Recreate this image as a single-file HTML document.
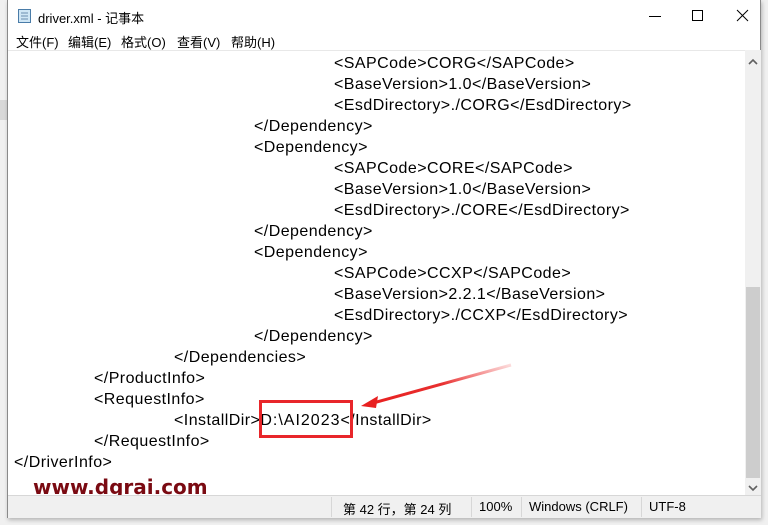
<!DOCTYPE html>
<html><head><meta charset="utf-8"><style>
*{margin:0;padding:0;box-sizing:border-box}
body{width:768px;height:525px;background:#f0f0f0;position:relative;overflow:hidden;font-family:"Liberation Sans","Noto Sans CJK SC",sans-serif}
.win{position:absolute;left:7px;top:0;width:754px;height:518px;background:#fff;border:1px solid #8a8a8a;border-top:none;box-shadow:1px 2px 4px rgba(0,0,0,.25)}
.title{position:absolute;left:0;top:0;width:100%;height:32px;font-size:13px;color:#000}
.title span{position:absolute;left:30px;top:8px}
.menu{position:absolute;left:0;top:31px;height:19px;width:100%;font-size:13px}
.menu span{position:absolute;top:1px}
.edit{position:absolute;left:0;top:50px;width:737px;height:445px;background:#fff;border-top:1px solid #e8e8e8}
.l{position:absolute;font-size:16px;line-height:21px;color:#000;white-space:pre;letter-spacing:0.45px;font-family:"Liberation Sans","Noto Sans CJK SC",sans-serif}
.sb{position:absolute;left:737px;top:50px;width:16px;height:445px;background:#f0f0f0}
.thumb{position:absolute;left:1px;top:237px;width:14px;height:191px;background:#cdcdcd}
.status{position:absolute;left:0;top:495px;width:753px;height:23px;background:#f0f0f0;border-top:1px solid #d7d7d7;font-size:13px}
.status span{position:absolute;top:3px}
.sep{position:absolute;top:1px;width:1px;height:20px;background:#d7d7d7}
</style></head><body>
<div style="position:absolute;left:0;top:100px;width:7px;height:20px;background:#d8d8d8"></div>
<div class="win">
 <div class="title">
  <svg style="position:absolute;left:9px;top:8px" width="15" height="16"><rect x="1.5" y="1.5" width="12" height="13" fill="#cfe6f5" stroke="#4a7ca8"/><path d="M4 5h7M4 8h7M4 11h7" stroke="#6b8fb0"/></svg>
  <span>driver.xml - 记事本</span>
  <svg style="position:absolute;left:641px;top:9px" width="110" height="14"><path d="M0 7.5h12" stroke="#000"/><rect x="43.5" y="1.5" width="10" height="10" fill="none" stroke="#000"/><path d="M88 1l11 11M99 1l-11 11" stroke="#000"/></svg>
 </div>
 <div class="menu">
  <span style="left:8px">文件(F)</span><span style="left:60px">编辑(E)</span><span style="left:113px">格式(O)</span><span style="left:169px">查看(V)</span><span style="left:223px">帮助(H)</span>
 </div>
 <div class="edit"></div>
 <div class="l" style="left:326px;top:53px">&lt;SAPCode&gt;CORG&lt;/SAPCode&gt;</div>
 <div class="l" style="left:326px;top:74px">&lt;BaseVersion&gt;1.0&lt;/BaseVersion&gt;</div>
 <div class="l" style="left:326px;top:95px">&lt;EsdDirectory&gt;./CORG&lt;/EsdDirectory&gt;</div>
 <div class="l" style="left:246px;top:116px">&lt;/Dependency&gt;</div>
 <div class="l" style="left:246px;top:137px">&lt;Dependency&gt;</div>
 <div class="l" style="left:326px;top:158px">&lt;SAPCode&gt;CORE&lt;/SAPCode&gt;</div>
 <div class="l" style="left:326px;top:179px">&lt;BaseVersion&gt;1.0&lt;/BaseVersion&gt;</div>
 <div class="l" style="left:326px;top:200px">&lt;EsdDirectory&gt;./CORE&lt;/EsdDirectory&gt;</div>
 <div class="l" style="left:246px;top:221px">&lt;/Dependency&gt;</div>
 <div class="l" style="left:246px;top:242px">&lt;Dependency&gt;</div>
 <div class="l" style="left:326px;top:263px">&lt;SAPCode&gt;CCXP&lt;/SAPCode&gt;</div>
 <div class="l" style="left:326px;top:284px">&lt;BaseVersion&gt;2.2.1&lt;/BaseVersion&gt;</div>
 <div class="l" style="left:326px;top:305px">&lt;EsdDirectory&gt;./CCXP&lt;/EsdDirectory&gt;</div>
 <div class="l" style="left:246px;top:326px">&lt;/Dependency&gt;</div>
 <div class="l" style="left:166px;top:347px">&lt;/Dependencies&gt;</div>
 <div class="l" style="left:86px;top:368px">&lt;/ProductInfo&gt;</div>
 <div class="l" style="left:86px;top:389px">&lt;RequestInfo&gt;</div>
 <div class="l" style="left:166px;top:410px">&lt;InstallDir&gt;<span style="letter-spacing:1px">D:\AI2023</span>&lt;/InstallDir&gt;</div>
 <div class="l" style="left:86px;top:431px">&lt;/RequestInfo&gt;</div>
 <div class="l" style="left:6px;top:452px">&lt;/DriverInfo&gt;</div>
 <div style="position:absolute;left:251px;top:400px;width:94px;height:38px;border:3px solid #e8262a"></div>
 <svg style="position:absolute;left:340px;top:360px" width="170" height="52"><defs><linearGradient id="g" x1="1" y1="0" x2="0" y2="1"><stop offset="0" stop-color="#f05050" stop-opacity=".2"/><stop offset=".5" stop-color="#e83030"/><stop offset="1" stop-color="#e82020"/></linearGradient></defs><path d="M163 5L25 43" stroke="url(#g)" stroke-width="3"/><path d="M13 46L30 36L28 48Z" fill="#e82020"/></svg>
 <div style="position:absolute;left:0;top:470px;width:737px;height:25px;overflow:hidden"><div style="position:absolute;left:25px;top:5px;font-size:20px;font-weight:bold;color:#7a0a12;font-family:'DejaVu Sans',sans-serif">www.dgrai.com</div></div>
 <div class="sb">
  <svg style="position:absolute;left:3px;top:8px" width="10" height="8"><path d="M1 6l4-4 4 4" stroke="#606060" stroke-width="1.6" fill="none"/></svg>
  <div class="thumb"></div>
  <svg style="position:absolute;left:3px;top:434px" width="10" height="8"><path d="M1 2l4 4 4-4" stroke="#606060" stroke-width="1.6" fill="none"/></svg>
 </div>
 <div class="status">
  <div class="sep" style="left:323px"></div><div class="sep" style="left:463px"></div><div class="sep" style="left:513px"></div><div class="sep" style="left:633px"></div>
  <span style="left:335px">第 42 行，第 24 列</span><span style="left:471px">100%</span><span style="left:521px">Windows (CRLF)</span><span style="left:641px">UTF-8</span>
 </div>
</div>
</body></html>
